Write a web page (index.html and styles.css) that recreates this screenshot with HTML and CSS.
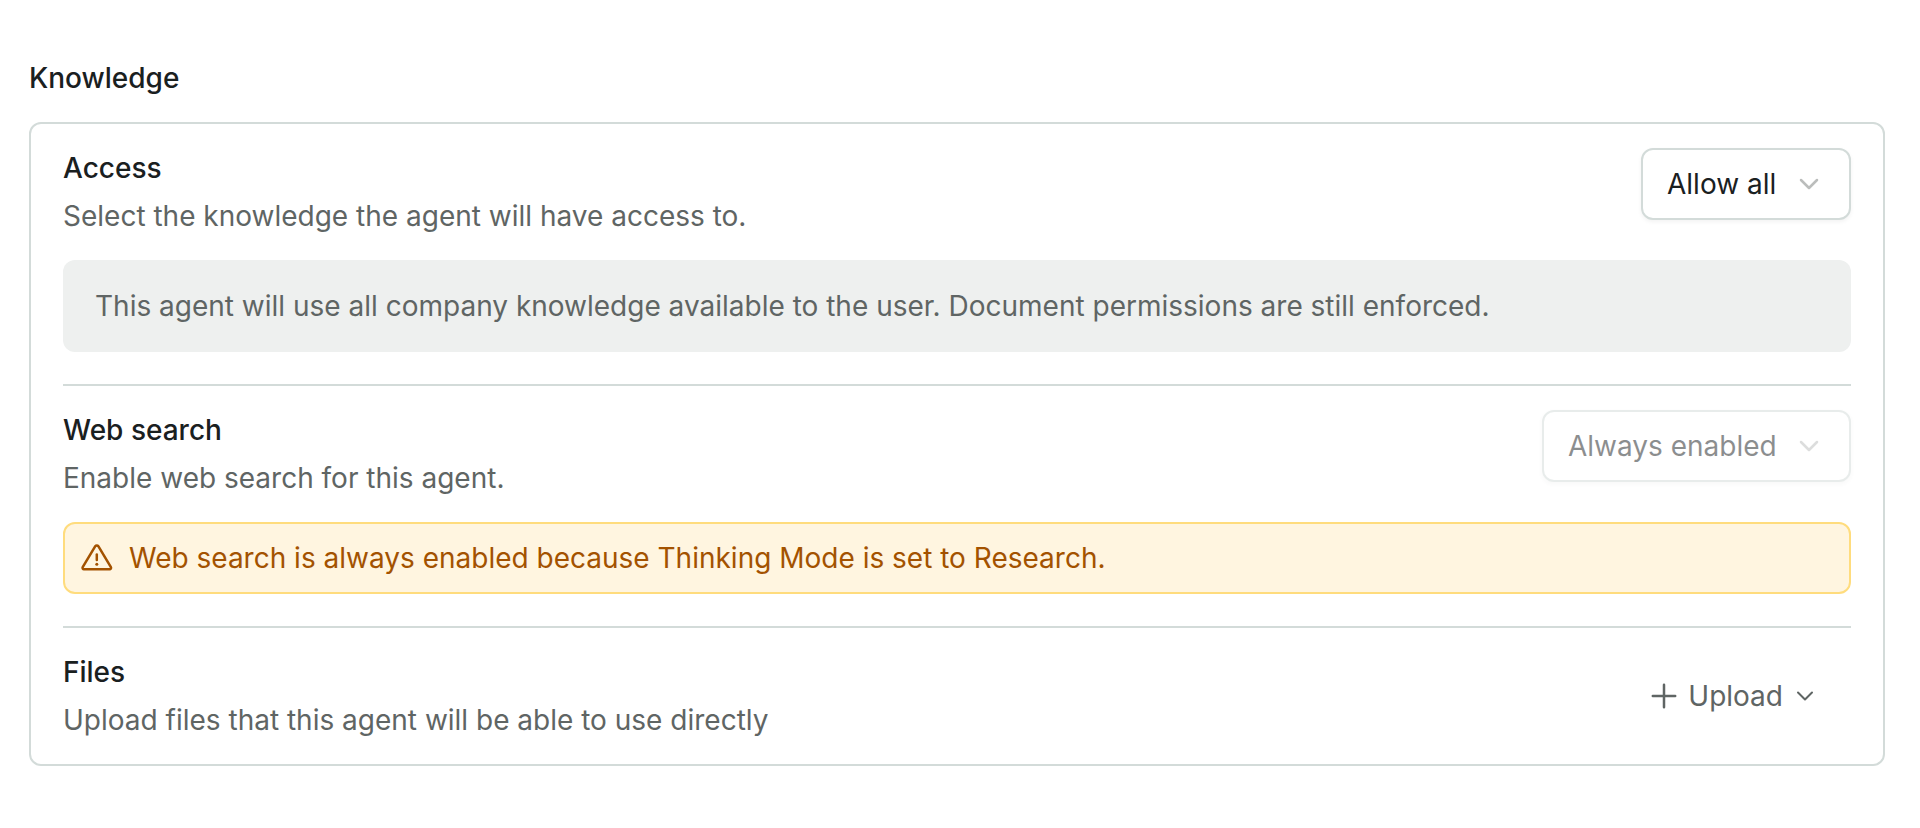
FILE: index.html
```html
<!DOCTYPE html>
<html lang="en">
<head>
    <meta charset="UTF-8">
    <meta name="viewport" content="width=device-width, initial-scale=1.0">
    <title>Knowledge</title>
    <link rel="stylesheet" href="styles.css">
</head>
<body>
    <main class="knowledge">
        <h2>Knowledge</h2>
        <div class="card">
            <!-- Access -->
            <section class="setting">
                <div class="setting-header">
                    <div class="setting-text">
                        <h3><label for="access">Access</label></h3>
                        <p>Select the knowledge the agent will have access to.</p>
                    </div>
                    <div class="select-box">
                        <select id="access">
                            <option>Allow all</option>
                        </select>
                        <svg class="chevron" viewBox="0 0 32 32" aria-hidden="true"><path d="M8 12l8 8 8-8"/></svg>
                    </div>
                </div>
                <p class="note">This agent will use all company knowledge available to the user. Document permissions are still enforced.</p>
            </section>
            <!-- Web search -->
            <section class="setting">
                <div class="setting-header">
                    <div class="setting-text">
                        <h3><label for="web-search">Web search</label></h3>
                        <p>Enable web search for this agent.</p>
                    </div>
                    <div class="select-box disabled">
                        <select id="web-search" disabled>
                            <option>Always enabled</option>
                        </select>
                        <svg class="chevron" viewBox="0 0 32 32" aria-hidden="true"><path d="M8 12l8 8 8-8"/></svg>
                    </div>
                </div>
                <div class="warning">
                    <svg class="warning-icon" viewBox="0 0 32 32" aria-hidden="true">
                        <path d="M14.3 4.2L1.7 25.2A1.4 1.4 0 0 0 2.9 27.2H28.7A1.4 1.4 0 0 0 29.9 25.2L17.3 4.2A1.8 1.8 0 0 0 14.3 4.2Z"/>
                        <path d="M15.8 12.5V18"/>
                        <circle cx="15.8" cy="22.3" r="1.5"/>
                    </svg>
                    <p>Web search is always enabled because Thinking Mode is set to Research.</p>
                </div>
            </section>
            <!-- Files -->
            <section class="setting files">
                <div class="setting-header">
                    <div class="setting-text">
                        <h3>Files</h3>
                        <p>Upload files that this agent will be able to use directly</p>
                    </div>
                    <button class="upload-btn" type="button">
                        <svg class="plus" viewBox="0 0 28 28" aria-hidden="true"><path d="M14 2.8v22.4M2.8 14h22.4"/></svg>
                        Upload
                        <svg class="small-chevron" viewBox="0 0 24 24" aria-hidden="true"><path d="M5 8.5l7 7 7-7"/></svg>
                    </button>
                </div>
            </section>
        </div>
    </main>
</body>
</html>
```

FILE: styles.css
```css
* {
    box-sizing: border-box;
}

body {
    margin: 0;
    padding: 58px 35px 58px 29px;
    font-family: Inter, "Liberation Sans", sans-serif;
    font-size: 28px;
    line-height: 40px;
    color: #1a201f;
    background-color: #ffffff;
}

h2, h3, p {
    margin: 0;
    font-size: 28px;
    font-weight: 400;
}

h2, h3 {
    font-weight: 500;
}

h2 {
    margin-bottom: 24px;
}

.card {
    padding: 0 32px;
    border: 2px solid #d3dbd9;
    border-radius: 12px;
}

.setting {
    padding: 24px 0 32px;
    border-bottom: 2px solid #d3dbd9;
}

.setting.files {
    padding-bottom: 24px;
    border-bottom: none;
}

.setting-header {
    display: flex;
    justify-content: space-between;
    align-items: flex-start;
    gap: 24px;
}

.files .setting-header {
    align-items: center;
}

.setting-text {
    display: grid;
    gap: 8px;
}

.setting-text p {
    color: #5f6564;
}

.note {
    margin-top: 24px;
    padding: 26px 32px;
    border-radius: 12px;
    color: #5f6564;
    background-color: #eef0ef;
}

/* drop-downs */
.select-box {
    position: relative;
    flex-shrink: 0;
}

.select-box.disabled {
    opacity: 0.5;
}

select {
    display: block;
    appearance: none;
    height: 72px;
    padding: 0 72px 0 24px;
    border: 2px solid #d3dbd9;
    border-radius: 12px;
    box-shadow: 0 2px 4px rgba(0, 0, 0, 0.05);
    font: inherit;
    color: #1a201f;
    background-color: #ffffff;
}

select:disabled {
    color: #1a201f;
    opacity: 1;
}

svg {
    fill: none;
    stroke: currentColor;
    stroke-width: 2.5;
    stroke-linecap: round;
    stroke-linejoin: round;
    flex-shrink: 0;
}

.chevron {
    position: absolute;
    top: 20px;
    right: 26px;
    width: 32px;
    height: 32px;
    color: #bbbdbc;
    pointer-events: none;
}

/* warning */
.warning {
    display: flex;
    align-items: center;
    gap: 16px;
    margin-top: 24px;
    padding: 14px 16px;
    border: 2px solid #ffdc7d;
    border-radius: 12px;
    color: #a35200;
    background-color: #fff5e0;
}

.warning-icon {
    width: 32px;
    height: 32px;
}

.warning-icon circle {
    fill: currentColor;
    stroke: none;
}

.upload-btn {
    display: flex;
    align-items: center;
    gap: 10px;
    flex-shrink: 0;
    height: 72px;
    padding: 0 34px;
    border: none;
    font: inherit;
    color: #5f6564;
    background: none;
    cursor: pointer;
}

.plus {
    width: 28px;
    height: 28px;
}

.small-chevron {
    width: 24px;
    height: 24px;
    stroke-width: 2;
}
```
